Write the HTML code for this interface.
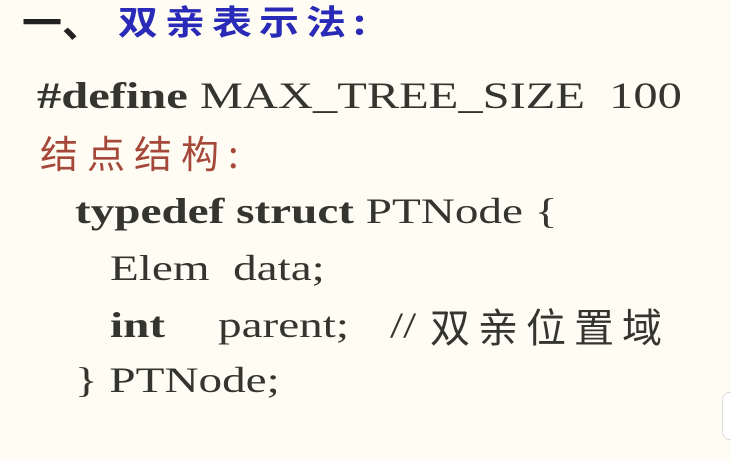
<!DOCTYPE html>
<html><head><meta charset="utf-8"><style>
body{margin:0;width:731px;height:460px;overflow:hidden;background:#fffdf3;position:relative;font-family:"Liberation Serif","Noto Sans CJK SC",serif;color:#353530}
.l{position:absolute;white-space:nowrap;line-height:1;transform-origin:0 0}
.s{transform:scaleX(1.31)}
b{font-weight:bold}
.cn{font-family:"Noto Sans CJK SC",sans-serif}
</style></head><body>
<div class="l" style="left:22px;top:4px;font-size:40px;font-weight:bold;color:#222">一、</div>
<div class="l cn" style="left:118px;top:3px;font-size:40px;letter-spacing:7px;color:#2a2ab8;font-weight:bold;transform:scaleY(0.85)">双亲表示法:</div>
<div class="l s" style="left:37px;top:78px;font-size:37px"><b>#define</b> MAX_TREE_SIZE&nbsp; 100</div>
<div class="l cn" style="left:40px;top:133px;font-size:38px;letter-spacing:9px;color:#a5483a">结点结构:</div>
<div class="l s" style="left:75px;top:193px;font-size:36px"><b>typedef struct</b> PTNode {</div>
<div class="l s" style="left:110px;top:250px;font-size:36px">Elem&nbsp; data;</div>
<div class="l s" style="left:110px;top:307px;font-size:36px"><b>int</b></div>
<div class="l s" style="left:218px;top:307px;font-size:36px">parent;</div>
<div class="l s" style="left:390px;top:307px;font-size:36px">//</div>
<div class="l cn" style="left:430px;top:305px;font-size:40px;letter-spacing:8px">双亲位置域</div>
<div class="l s" style="left:75px;top:362px;font-size:36px">} PTNode;</div>
<div style="position:absolute;left:722px;top:392px;width:20px;height:46px;border:1px solid #ddd;border-radius:8px;background:#fff"></div>
</body></html>
